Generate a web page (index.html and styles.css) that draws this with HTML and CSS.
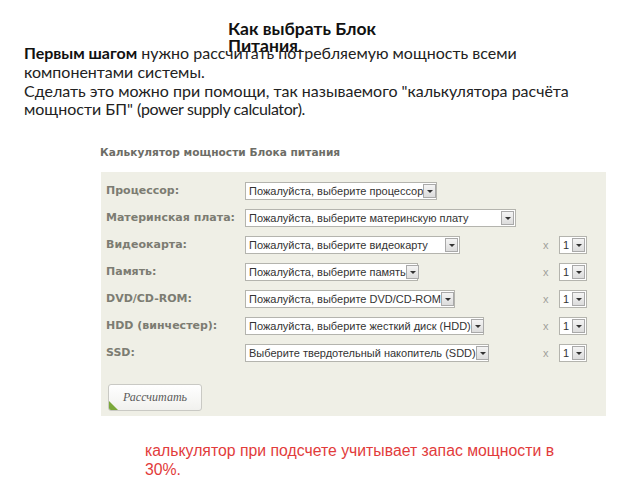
FILE: index.html
```html
<!DOCTYPE html>
<html lang="ru">
<head>
<meta charset="utf-8">
<link rel="stylesheet" href="styles.css">
</head>
<body>
<h1 class="title">Как выбрать Блок<br>Питания.</h1>
<p class="intro"><b>Первым шагом</b> нужно рассчитать потребляемую мощность всеми компонентами системы.<br>Сделать это можно при помощи, так называемого "калькулятора расчёта мощности БП" <span class="latin">(power supply calculator).</span></p>

<div class="calc">
  <div class="calc-head">Калькулятор мощности Блока питания</div>
  <div class="panel">
    <div class="row">
      <span class="label">Процессор:</span>
      <span class="sel w-cpu"><span class="sel-text">Пожалуйста, выберите процессор</span><span class="arrow"></span></span>
    </div>
    <div class="row">
      <span class="label">Материнская плата:</span>
      <span class="sel w-mb"><span class="sel-text">Пожалуйста, выберите материнскую плату</span><span class="arrow"></span></span>
    </div>
    <div class="row">
      <span class="label">Видеокарта:</span>
      <span class="sel w-gpu"><span class="sel-text">Пожалуйста, выберите видеокарту</span><span class="arrow"></span></span>
      <span class="times">x</span>
      <span class="sel qty"><span class="sel-text">1</span><span class="arrow"></span></span>
    </div>
    <div class="row">
      <span class="label">Память:</span>
      <span class="sel w-ram"><span class="sel-text">Пожалуйста, выберите память</span><span class="arrow"></span></span>
      <span class="times">x</span>
      <span class="sel qty"><span class="sel-text">1</span><span class="arrow"></span></span>
    </div>
    <div class="row">
      <span class="label">DVD/CD-ROM:</span>
      <span class="sel w-dvd"><span class="sel-text">Пожалуйста, выберите DVD/CD-ROM</span><span class="arrow"></span></span>
      <span class="times">x</span>
      <span class="sel qty"><span class="sel-text">1</span><span class="arrow"></span></span>
    </div>
    <div class="row">
      <span class="label">HDD (винчестер):</span>
      <span class="sel w-hdd"><span class="sel-text">Пожалуйста, выберите жесткий диск (HDD)</span><span class="arrow"></span></span>
      <span class="times">x</span>
      <span class="sel qty"><span class="sel-text">1</span><span class="arrow"></span></span>
    </div>
    <div class="row">
      <span class="label">SSD:</span>
      <span class="sel w-ssd"><span class="sel-text">Выберите твердотельный накопитель (SDD)</span><span class="arrow"></span></span>
      <span class="times">x</span>
      <span class="sel qty"><span class="sel-text">1</span><span class="arrow"></span></span>
    </div>
    <div class="btn-row">
      <span class="btn">Рассчитать</span>
    </div>
  </div>
</div>

<p class="note">калькулятор при подсчете учитывает запас мощности в<br>30%.</p>
</body>
</html>
```

FILE: styles.css
```css
html, body {
  margin: 0;
  padding: 0;
  background: #ffffff;
}

body {
  width: 640px;
  height: 480px;
  overflow: hidden;
  font-family: Lato, "Liberation Sans", sans-serif;
  color: #222;
}

.title {
  margin: 20px 0 0 228px;
  height: 17px;
  font-family: Lato, "Liberation Sans", sans-serif;
  font-size: 17.5px;
  line-height: 17px;
  font-weight: bold;
  color: #111;
}

.intro {
  margin: 7px 0 0 24px;
  width: 600px;
  font-size: 16px;
  line-height: 18.8px;
  color: #222;
}

.intro b {
  color: #111;
}

.latin {
  letter-spacing: -0.4px;
}

.calc {
  margin: 26px 0 0 100px;
  width: 507px;
}

.calc-head {
  font-family: "DejaVu Sans", Verdana, sans-serif;
  font-weight: bold;
  font-size: 10.6px;
  line-height: 14px;
  color: #6d6d66;
}

.panel {
  margin: 13px 0 0 1px;
  width: 505px;
  height: 244px;
  box-sizing: border-box;
  padding: 5px 0 0 5px;
  background: #efefe6;
}

.row {
  display: grid;
  grid-template-columns: 139px 298px 16px 30px;
  align-items: center;
  height: 27px;
}

.label {
  font-family: "DejaVu Sans", Verdana, sans-serif;
  font-weight: bold;
  font-size: 11px;
  color: #7c7c72;
}

.sel {
  display: flex;
  align-items: center;
  justify-content: space-between;
  box-sizing: border-box;
  height: 18px;
  border: 1px solid #b4b4ae;
  background: #ffffff;
  padding: 0 1px 0 3px;
}

.sel-text {
  font-family: "Liberation Sans", Arial, sans-serif;
  font-size: 11px;
  color: #333;
  white-space: nowrap;
}

.arrow {
  flex: none;
  position: relative;
  width: 13px;
  height: 14px;
  box-sizing: border-box;
  border: 1px solid #a9a9a9;
  background: linear-gradient(#f4f4f4, #dcdcdc);
}

.arrow::after {
  content: "";
  position: absolute;
  left: 3px;
  top: 5px;
  border-left: 3px solid transparent;
  border-right: 3px solid transparent;
  border-top: 3px solid #333;
}

.w-cpu { width: 192px; }
.w-mb { width: 271px; }
.w-gpu { width: 215px; }
.w-ram { width: 173px; }
.w-dvd { width: 210px; }
.w-hdd { width: 239px; }
.w-ssd { width: 244px; }
.qty { width: 28px; }

.times {
  font-family: "Liberation Sans", Arial, sans-serif;
  font-size: 11px;
  color: #a0a09a;
}

.btn-row {
  margin-top: 18px;
  padding-left: 2px;
}

.btn {
  position: relative;
  display: inline-flex;
  align-items: center;
  justify-content: center;
  box-sizing: border-box;
  width: 94px;
  height: 27px;
  border: 1px solid #c9c9c4;
  border-radius: 3px;
  background: linear-gradient(#ffffff, #f1f1ee);
  font-family: "Liberation Serif", serif;
  font-style: italic;
  font-size: 12px;
  color: #5a5a5a;
  overflow: hidden;
}

.btn::before {
  content: "";
  position: absolute;
  left: 0;
  bottom: 0;
  border-left: 9px solid #7aa83a;
  border-top: 9px solid transparent;
}

.note {
  margin: 25px 0 0 145px;
  font-family: "Liberation Sans", Arial, sans-serif;
  font-size: 15.8px;
  line-height: 19px;
  color: #e23b3b;
}
```
